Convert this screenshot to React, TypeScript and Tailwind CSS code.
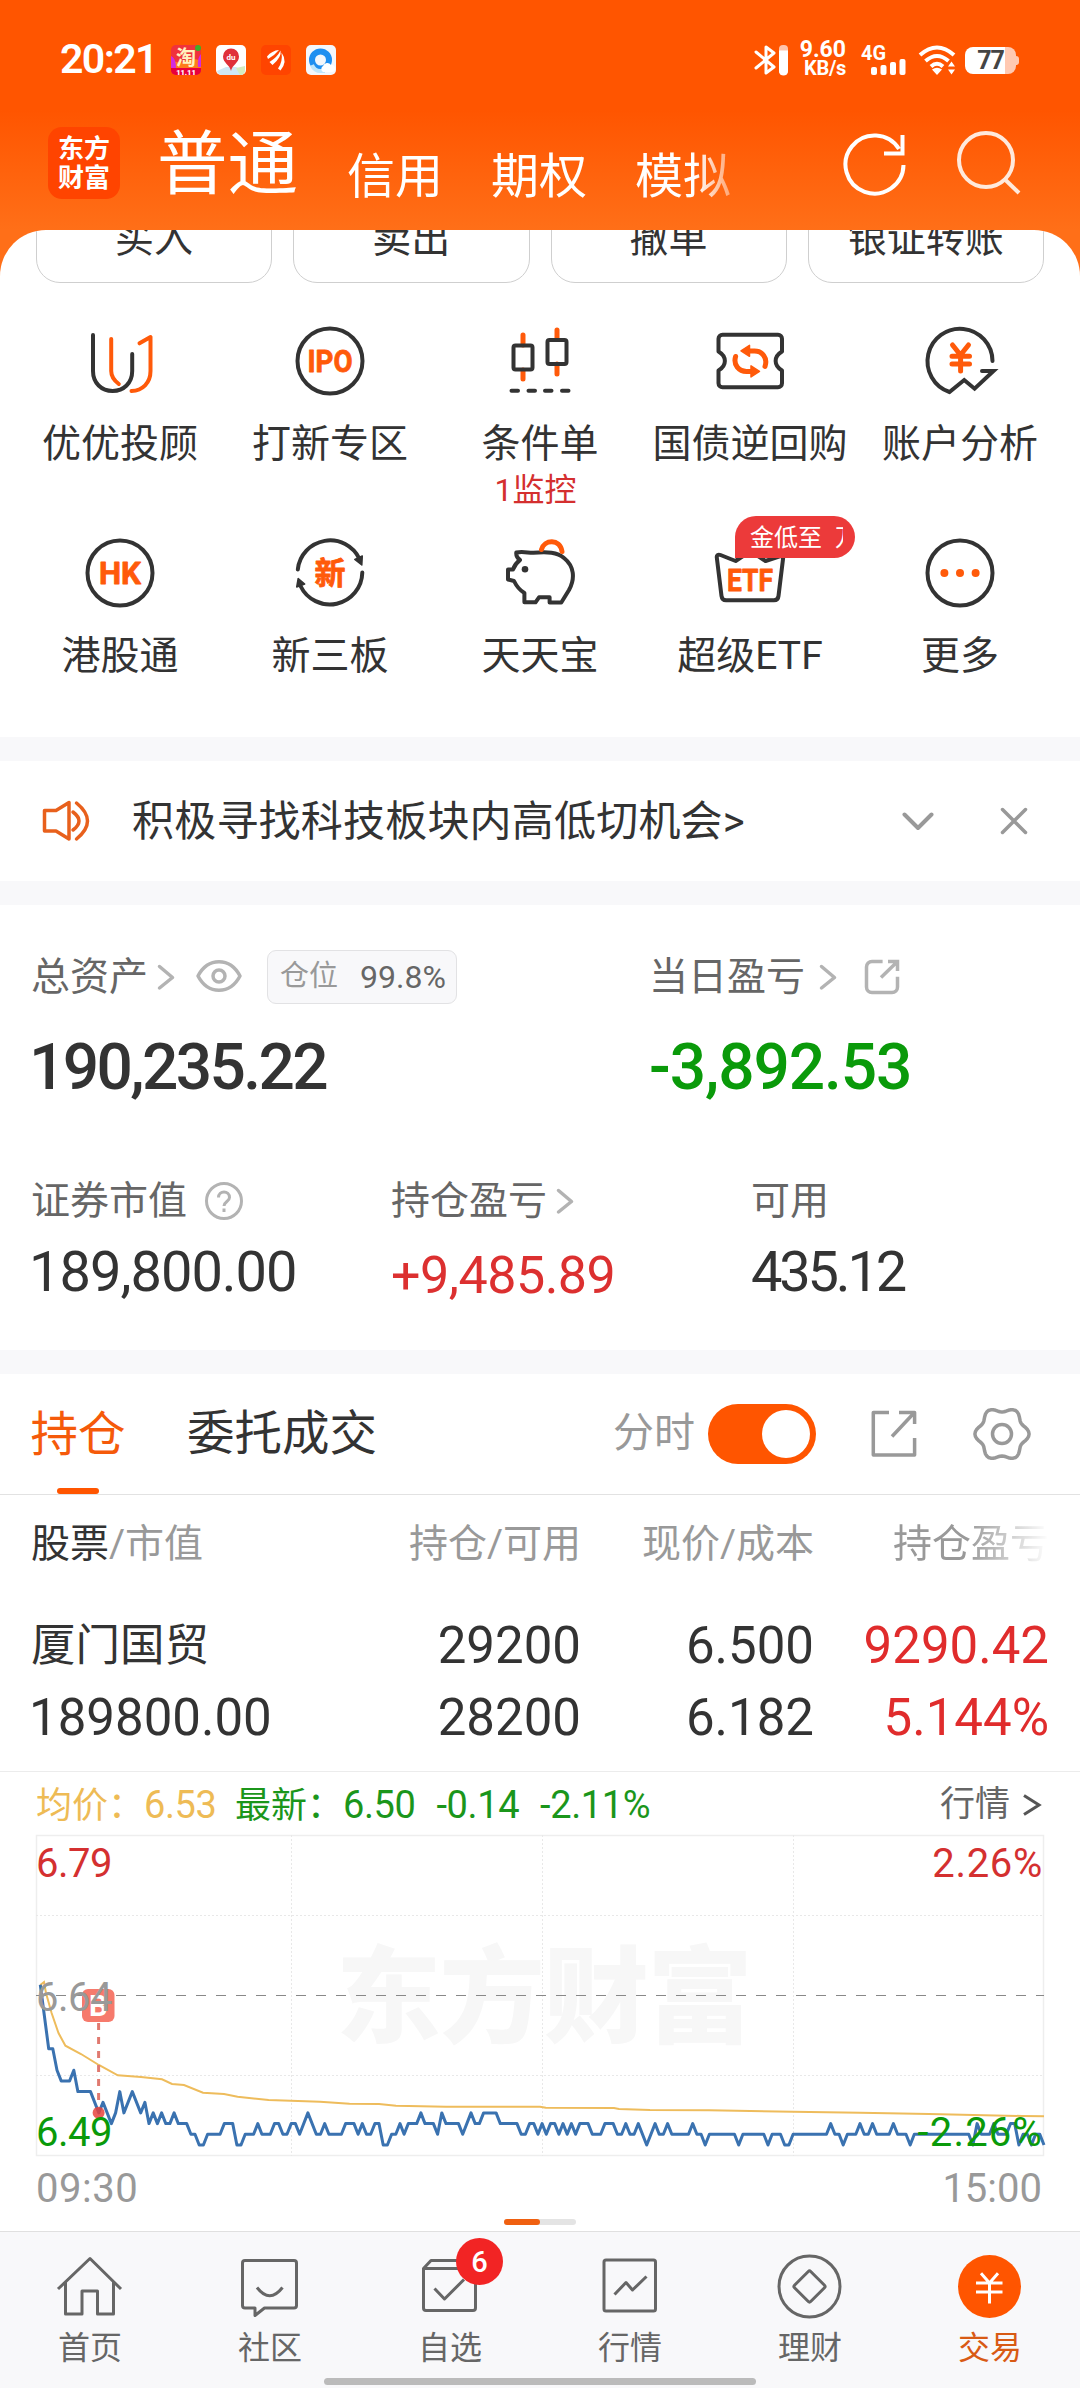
import type { ReactNode } from 'react';
import { clsx } from 'clsx';

const DARK = '#333333';
const ORANGE = '#ff5a0a';

// minute index -> price in cents, only the turning points
const pricePoints: [number, number][] = [
  [0, 665], [2, 659], [3, 659], [4, 657], [5, 656], [7, 656], [8, 657], [9, 655], [12, 655], [14, 653],
  [15, 654], [17, 652], [18, 653], [19, 655], [20, 653], [22, 655], [24, 653], [25, 654], [26, 652], [27, 653],
  [28, 652], [29, 653], [30, 652], [31, 652], [32, 653], [33, 652], [35, 652], [36, 651], [37, 651], [38, 650],
  [39, 650], [40, 651], [43, 651], [44, 652], [46, 652], [47, 650], [48, 650], [49, 651], [51, 651], [52, 652],
  [53, 651], [55, 651], [56, 652], [57, 652], [58, 651], [59, 651], [60, 652], [61, 652], [62, 651], [64, 653],
  [66, 651], [67, 651], [68, 652], [69, 651], [72, 651], [73, 652], [75, 652], [76, 651], [77, 652], [78, 651],
  [79, 651], [80, 652], [81, 652], [82, 650], [83, 650], [84, 651], [85, 651], [86, 652], [87, 651], [88, 652],
  [90, 652], [91, 653], [92, 652], [94, 652], [95, 651], [96, 653], [97, 652], [100, 652], [101, 651], [103, 653],
  [104, 652], [105, 652], [106, 653], [109, 653], [110, 652], [114, 652], [115, 651], [116, 651], [117, 652],
  [118, 652], [119, 651], [120, 652], [121, 651], [122, 652], [123, 652], [124, 651], [125, 652], [126, 651],
  [127, 652], [128, 651], [129, 652], [131, 652], [132, 651], [134, 651], [135, 652], [137, 652], [138, 651],
  [139, 651], [140, 652], [141, 651], [142, 651], [143, 652], [145, 650], [147, 652], [148, 651], [149, 651],
  [150, 652], [151, 651], [155, 651], [156, 652], [157, 651], [158, 651], [159, 650], [160, 651], [166, 651],
  [167, 650], [168, 651], [173, 651], [174, 650], [175, 651], [177, 651], [178, 650], [179, 650], [180, 651],
  [188, 651], [189, 652], [190, 651], [191, 651], [192, 650], [193, 651], [195, 651], [196, 652], [197, 651],
  [198, 651], [199, 652], [200, 651], [203, 651], [204, 652], [205, 651], [207, 651], [208, 650], [209, 651],
  [222, 651], [223, 650], [224, 652], [225, 651], [227, 651], [228, 652], [229, 651], [231, 651], [232, 652],
  [233, 652], [234, 650], [235, 651], [236, 651], [237, 650], [238, 651], [239, 651], [240, 650],
];

const priceLine = pricePoints
  .map(([i, p]) => `${(4.3 + i * 4.182).toFixed(1)},${(320.7 - 10.69 * (p - 649)).toFixed(1)}`)
  .join(' ');

const averageLine =
  '4.3,150 8,147 10,158 15.6,178 22.5,198 29.4,210.7 45,219 62.8,230 81.8,240.3 105,242 126,244.3 136,249 148,250 167,257.7 188,259 201.6,261.7 232.6,265 284,266.7 313.5,268.7 343,269 360,270.7 410,271.7 504,271.7 509.8,272.7 578,273 583,274 614,275 673,275.3 757,276.7 824,277.7 893,279 986,281 1008,281.3';

function MenuIcon({ children }: { children: ReactNode }) {
  return (
    <svg
      viewBox="0 0 84 84"
      className="w-[84px] h-[84px]"
      fill="none"
      stroke={DARK}
      strokeWidth={4}
      strokeLinecap="round"
      strokeLinejoin="round"
    >
      {children}
    </svg>
  );
}

function IconText({ y, width, size, children }: { y: number; width: number; size: number; children: string }) {
  return (
    <text
      x={42}
      y={y}
      textAnchor="middle"
      textLength={width}
      lengthAdjust="spacingAndGlyphs"
      fontSize={size}
      fontWeight={700}
      fill={ORANGE}
      stroke={ORANGE}
      strokeWidth={0.8}
    >
      {children}
    </text>
  );
}

const menu = [
  {
    label: '优优投顾',
    icon: (
      <MenuIcon>
        <path d="M15 16V52c0 12 8.5 20 19.6 20s19.6-8 19.6-20V35" />
        <path stroke={ORANGE} d="M33.2 20V52c0 6 3 9.500 7.600 13M61.500 24.300L72.500 18V52c0 12-8 19.500-19 20" />
      </MenuIcon>
    ),
  },
  {
    label: '打新专区',
    icon: (
      <MenuIcon>
        <circle cx="42" cy="42" r="32.500" />
        <IconText y={53} width={45} size={31}>IPO</IconText>
      </MenuIcon>
    ),
  },
  {
    label: '条件单',
    note: '1监控',
    icon: (
      <MenuIcon>
        <path stroke={ORANGE} strokeWidth={5} d="M25 16V26M25 51V60M59 11V20M59 45V55" />
        <rect x="15.500" y="26.500" width="19" height="24" rx="2" />
        <rect x="49.500" y="21" width="19" height="24" rx="2" />
        <path d="M13.500 71.700h6.500M30.500 71.700h6.500M47 71.700h6.500M64 71.700h6.500" />
      </MenuIcon>
    ),
  },
  {
    label: '国债逆回购',
    icon: (
      <MenuIcon>
        <path d="M14.500 15.700H70a4 4 0 0 1 4 4V32.500c-8.500 5-8.500 14 0 19V64.300a4 4 0 0 1-4 4H14.500a4 4 0 0 1-4-4V51.500c8.500-5 8.500-14 0-19V19.700a4 4 0 0 1 4-4z" />
        <path stroke={ORANGE} strokeWidth={5} d="M27.600 37.500C25 46 31 52.400 38.500 52.400H46M57 47.500C60 38.500 54 32 46.500 32H39" />
        <path fill={ORANGE} stroke={ORANGE} strokeWidth={1.5} d="M51.500 52.400l-8.500-5.500v11zM33 31.800l8.500-5.500v11z" />
      </MenuIcon>
    ),
  },
  {
    label: '账户分析',
    icon: (
      <MenuIcon>
        <path d="M74.500 42A32.500 32.500 0 1 0 31.500 73L46.200 61l10.400 8.700L75.500 52H64" strokeLinejoin="miter" />
        <path stroke={ORANGE} strokeWidth={5} d="M34.500 26l8 10 8-10M34 37.200H51.500M34 45H51.500M42.600 37V52" />
      </MenuIcon>
    ),
  },
  {
    label: '港股通',
    icon: (
      <MenuIcon>
        <circle cx="42" cy="42" r="32.500" />
        <IconText y={53} width={42} size={31}>HK</IconText>
      </MenuIcon>
    ),
  },
  {
    label: '新三板',
    icon: (
      <MenuIcon>
        <path d="M9.800 38.500A32.500 32.500 0 0 1 71.500 28M74.300 41.500A32.500 32.500 0 0 1 12.500 55" />
        <path fill={DARK} strokeWidth={1.5} d="M73.800 34l.500-9-7.500 3.500zM10.200 47.500l-1.500 8.500 8-3z" />
        <IconText y={53} width={31} size={31}>新</IconText>
      </MenuIcon>
    ),
  },
  {
    label: '天天宝',
    icon: (
      <MenuIcon>
        <path d="M22 29c-3-2-4-5-3.700-7.500 7-1.500 12 .500 17 .300 14-1 24-.800 30.700 5.200 10 8 11.500 20 5 32L63.300 71.500H51.600V66.300H41L37.500 71.300H26.400V62c-5-3-8-7-10.400-12L10 48.500V38.500H15c1.500-4 3.500-7 7-9.500z" />
        <circle cx="27" cy="38.300" r="3.300" fill={DARK} stroke="none" />
        <path stroke={ORANGE} strokeWidth={5} d="M43.500 18.500C46 8.500 62 7 64 20.500" />
      </MenuIcon>
    ),
  },
  {
    label: '超级ETF',
    badge: true,
    icon: (
      <MenuIcon>
        <path d="M27.600 30L12.500 24c-2.500-1-4 .300-3.700 2.500L13.500 65c.400 3 2 4.300 4.500 4.300H66c2.500 0 4.200-1.300 4.500-4.300L75.500 24 57.500 30 42.500 20z" />
        <IconText y={60} width={46} size={32}>ETF</IconText>
      </MenuIcon>
    ),
  },
  {
    label: '更多',
    icon: (
      <MenuIcon>
        <circle cx="42" cy="42" r="32.500" />
        <g fill={ORANGE} stroke="none">
          <circle cx="26.400" cy="42" r="4" />
          <circle cx="42" cy="42" r="4" />
          <circle cx="57.600" cy="42" r="4" />
        </g>
      </MenuIcon>
    ),
  },
];

function StatusBar() {
  return (
    <div className="h-[112px] pt-[8px] pl-[60px] pr-[61px] flex items-center text-white">
      <span className="text-[41px] font-semibold tracking-[-1.6px] w-[111px]">20:21</span>
      <div className="flex gap-[15px]">
        <svg viewBox="0 0 30 30" className="w-[30px] h-[30px]">
          <rect width="30" height="30" rx="5" fill="#f0323c" />
          <path d="M0 14q8 6 15 2t15 0v8H0z" fill="#ff7a1a" />
          <path d="M0 11q5 2 5 12H0zM30 9q-4 4-3 13h3z" fill="#d22be0" />
          <circle cx="27" cy="3" r="3" fill="#3fae2a" />
          <path d="M0 23H30v2a5 5 0 0 1-5 5H5a5 5 0 0 1-5-5z" fill="#e8003c" />
          <text x="15" y="20" textAnchor="middle" fontSize="20" fontWeight="700" fill="#fff3c0">淘</text>
          <text x="15" y="29.500" textAnchor="middle" fontSize="7.500" fontWeight="900" fill="#fff">11.11</text>
        </svg>
        <svg viewBox="0 0 30 30" className="w-[30px] h-[30px]">
          <rect width="30" height="30" rx="5" fill="#fff" />
          <path d="M1 26l9-4h10l9 4q-1 4-5 4H6q-4 0-5-4z" fill="#cfe8f6" />
          <path d="M20 23l9-2v4q0 5-5 5z" fill="#d5ecc0" />
          <path d="M15 26c-1-6-8-8-8-14.500a8 8 0 0 1 16 0C23 18 16 20 15 26z" fill="#e0303a" />
          <text x="15" y="15" textAnchor="middle" fontSize="8" fontWeight="700" fill="#fff">du</text>
        </svg>
        <svg viewBox="0 0 30 30" className="w-[30px] h-[30px]">
          <rect width="30" height="30" rx="5" fill="#ff4400" />
          <path d="M6 11.500Q11 5.500 18 5q-4 5-11 9zM8.500 17q8-5 11-11.500 1.500 6.500-8 14.500zM17 23.500q5-7 3.500-16 6.500 9-1 18z" fill="#fff" />
        </svg>
        <svg viewBox="0 0 30 30" className="w-[30px] h-[30px]">
          <rect width="30" height="30" rx="5" fill="#f4f7fb" />
          <circle cx="14.500" cy="15" r="8.500" fill="none" stroke="#1f8ff0" strokeWidth="6" />
          <path d="M6 20a9 9 0 0 0 9 6h4" fill="none" stroke="#bfe6fb" strokeWidth="4" />
          <path d="M17 27a3.500 3.500 0 0 1 0-6 4.500 4.500 0 0 1 8-1 3.500 3.500 0 0 1 1 7z" fill="#fff" />
        </svg>
      </div>

      <div className="ml-auto flex items-center">
        <svg viewBox="0 0 34 32" className="w-[34px] h-[32px]" fill="none" stroke="#fff" strokeWidth="3">
          <path d="M2 8L20 23 12 29V3L20 9 2 24" strokeLinejoin="round" strokeLinecap="round" />
          <rect x="25" y="1" width="9" height="30" rx="4" fill="#ffc4aa" stroke="none" />
          <path d="M25 6.500h9V27a4 4 0 0 1-9 0z" fill="#fff" stroke="none" />
        </svg>
        <div className="ml-[10px] w-[48px] text-right leading-[19px] font-bold -mt-[2px]">
          <div className="text-[23px]">9.60</div>
          <div className="text-[20px] tracking-[-0.3px]">KB/s</div>
        </div>
        <svg viewBox="0 0 46 32" className="ml-[15px] w-[46px] h-[32px]" fill="#fff">
          <text x="0" y="16" fontSize="21" fontWeight="700" textLength="25" lengthAdjust="spacingAndGlyphs">4G</text>
          <rect x="10" y="23" width="6" height="8" rx="2" />
          <rect x="19.500" y="21" width="6" height="10" rx="2" />
          <rect x="29" y="18" width="6" height="13" rx="2" />
          <rect x="38.500" y="15" width="6" height="16" rx="2" />
        </svg>
        <svg viewBox="0 0 40 32" className="ml-[11px] w-[40px] h-[32px]" fill="none" stroke="#fff" strokeWidth="4">
          <path d="M2 11Q19 -4 36 11M7.500 17Q19 7 30.500 17M13 22.500Q19 17 25 22.500" />
          <path d="M19 31l-5-5.500q5-3.500 10 0zM30 22.500l3.500-5 3.500 5zM30 25.500l3.500 5 3.500-5z" fill="#fff" stroke="none" />
        </svg>
        <div className="ml-[7px] flex items-center">
          <div className="w-[51px] h-[27px] rounded-[8px] bg-[linear-gradient(90deg,#fff_79%,#ffc9b2_79%)] text-center text-[25px] leading-[28px] font-bold text-[#444] tracking-[-1px]">
            77
          </div>
          <div className="w-[3px] h-[9px] rounded-r-[3px] bg-[#ffc9b2]" />
        </div>
      </div>
    </div>
  );
}

function Header() {
  return (
    <header className="h-[118px] flex pl-[48px]">
      <div className="mt-[15px] w-[72px] h-[72px] rounded-[14px] bg-[#ff4400] pt-[8px] text-center text-[26px] leading-[28.500px] font-bold text-white">
        东方
        <br />
        财富
      </div>
      <div className="ml-[37px] w-[618px] flex text-white [mask-image:linear-gradient(90deg,#000_87%,transparent_97%)]">
        <span className="text-[70.500px] leading-[107px] w-[144px]">普通</span>
        <div className="ml-[46px] flex gap-[48px] text-[48px] leading-[130px]">
          <span>信用</span>
          <span>期权</span>
          <span>模拟</span>
        </div>
      </div>
      <svg viewBox="0 0 68 68" className="ml-[66px] mt-[18px] w-[68px] h-[68px]" fill="none" stroke="#fff" strokeWidth="4">
        <path d="M62.500 35A29 29 0 1 1 58 19M61.500 5V23.500H43" />
      </svg>
      <svg viewBox="0 0 68 68" className="ml-[44px] mt-[18px] w-[68px] h-[68px]" fill="none" stroke="#ffe9dc" strokeWidth="4">
        <circle cx="33" cy="30" r="27" />
        <path d="M52 49.500L66 63" />
      </svg>
    </header>
  );
}

function QuickMenu() {
  return (
    <section className="h-[507px] bg-white rounded-t-[46px] overflow-hidden shrink-0">
      <div className="-mt-[35px] mx-[36px] grid grid-cols-4 gap-[21px]">
        {['买入', '卖出', '撤单', '银证转账'].map((t) => (
          <button key={t} className="h-[88px] border border-[#cfcfcf] rounded-[24px] text-[39px] leading-[86px]">
            {t}
          </button>
        ))}
      </div>
      <div className="mt-[36px] mx-[15px] grid grid-cols-5">
        {menu.map((item) => (
          <div key={item.label} className="relative h-[212px] flex flex-col items-center">
            {item.icon}
            <span className="mt-[21px] text-[39px] leading-[40px] whitespace-nowrap">{item.label}</span>
            {item.note && (
              <span className="mt-[7px] mr-[9px] text-[32px] leading-[38px] text-[#d42f2f]">{item.note}</span>
            )}
            {item.badge && (
              <div className="absolute left-[90px] -top-[15px] w-[120px] h-[42px] rounded-[21px] rounded-bl-none bg-[#ec3a3a] pl-[15px] pr-[12px]">
                <div className="overflow-hidden whitespace-nowrap text-[24px] leading-[44px] text-white">
                  金低至<span className="ml-[13px]">万</span>
                </div>
              </div>
            )}
          </div>
        ))}
      </div>
    </section>
  );
}

function Notice() {
  return (
    <section className="h-[120px] my-[24px] bg-white flex items-center pl-[42px]">
      <svg viewBox="0 0 48 48" className="w-[48px] h-[48px]" fill="none" stroke="#e8601c" strokeWidth="3.500" strokeLinejoin="round" strokeLinecap="round">
        <path d="M2.500 13.500H14L27 5.500V42L14 34H2.500zM31 15q12 9 0 18M34.500 6q22 18 0 36" />
      </svg>
      <span className="ml-[42px] w-[770px] pt-[1px] text-[42px] leading-[44px] tracking-[0.2px]">积极寻找科技板块内高低切机会&gt;</span>
      <svg viewBox="0 0 32 32" className="w-[32px] h-[32px]" fill="none" stroke="#999" strokeWidth="4" strokeLinecap="round" strokeLinejoin="round">
        <path d="M2.500 9.500L16 23 29.500 9.500" />
      </svg>
      <svg viewBox="0 0 32 32" className="ml-[64px] w-[32px] h-[32px]" fill="none" stroke="#999" strokeWidth="3.500" strokeLinecap="round">
        <path d="M4.500 4.500L27.500 27.500M27.500 4.500L4.500 27.500" />
      </svg>
    </section>
  );
}

function Chevron({ className }: { className?: string }) {
  return (
    <svg viewBox="0 0 18 28" className={clsx('w-[18px] h-[28px]', className)} fill="none" stroke="#b3b3b3" strokeWidth="3.500" strokeLinecap="round" strokeLinejoin="round">
      <path d="M2.500 3.500L15.500 14.500 2.500 25" />
    </svg>
  );
}

function Assets() {
  return (
    <section className="h-[445px] bg-white pt-[45px] pl-[31px] text-[39px] text-[#666] shrink-0">
      <div className="h-[54px] flex items-center">
        <div className="w-[618px] flex items-center">
          <span>总资产</span>
          <Chevron className="ml-[9px]" />
          <svg viewBox="0 0 46 34" className="ml-[21px] w-[46px] h-[34px] -mt-[2px]" fill="none" stroke="#b3b3b3" strokeWidth="3.500">
            <path d="M2 17C12-2 34-2 44 17 34 36 12 36 2 17z" strokeLinejoin="round" />
            <circle cx="23" cy="17" r="6" />
          </svg>
          <div className="ml-[25px] w-[190px] h-[54px] border border-[#e2e2e4] rounded-[9px] bg-[#f8f8fa] flex items-center pl-[12px]">
            <span className="text-[29px] text-[#999]">仓位</span>
            <span className="ml-[22px] text-[32px] leading-[34px]">99.8%</span>
          </div>
        </div>
        <span>当日盈亏</span>
        <Chevron className="ml-[14px]" />
        <svg viewBox="0 0 36 36" className="ml-[27px] w-[36px] h-[36px]" fill="none" stroke="#b3b3b3" strokeWidth="3.500">
          <path d="M18.600 2.500H8a5.500 5.500 0 0 0-5.500 5.500V28a5.500 5.500 0 0 0 5.500 5.500H28a5.500 5.500 0 0 0 5.500-5.500V17.700M24 2.500h9.500V12M17 18.500L33 3" />
        </svg>
      </div>
      <div className="mt-[31px] h-[66px] flex items-center text-[64px] leading-[66px] font-medium tracking-[-2.6px]">
        <span className="-ml-[2px] w-[620px] text-[#333]">190,235.22</span>
        <span className="text-[#0a9a0a] tracking-[-1.1px]">-3,892.53</span>
      </div>
      <div className="mt-[80px] grid grid-cols-[360px_360px_1fr]">
        <div className="h-[40px] flex items-center leading-[40px]">
          证券市值
          <svg viewBox="0 0 40 40" className="ml-[17px] w-[40px] h-[40px]" fill="none" stroke="#b3b3b3" strokeWidth="3">
            <circle cx="20" cy="20" r="17.500" />
            <path d="M14.500 16.500c0-7.500 11-7.500 11 0 0 4-5.500 4-5.500 8.500M20 27.500v3.500" />
          </svg>
        </div>
        <div className="h-[40px] flex items-center leading-[40px]">
          持仓盈亏
          <Chevron className="ml-[9px]" />
        </div>
        <div className="leading-[40px]">可用</div>
        <div className="mt-[21px] -ml-[2px] text-[56px] leading-[60px] tracking-[-1px] text-[#333]">189,800.00</div>
        <div className="mt-[25px] text-[52px] leading-[60px] tracking-[-0.5px] text-[#dc3030]">+9,485.89</div>
        <div className="mt-[21px] text-[56px] leading-[60px] tracking-[-3.2px] text-[#333]">435.12</div>
      </div>
    </section>
  );
}

// six soft teeth, valleys at every 60 degrees
const gearPath =
  Array.from({ length: 72 }, (_, k) => {
    const a = (k * 5 * Math.PI) / 180;
    const r = 24.5 - 2.6 * Math.cos(6 * (a - Math.PI / 2));
    return `${k ? 'L' : 'M'}${(29 + r * Math.cos(a)).toFixed(1)} ${(29 + r * Math.sin(a)).toFixed(1)}`;
  }).join('') + 'Z';

function Tabs() {
  return (
    <div className="h-[121px] pl-[31px] border-b border-[#e2e2e2] flex items-center text-[47.500px] whitespace-nowrap">
      <div className="h-full w-[94px] flex flex-col items-center">
        <span className="mt-[31px] leading-[60px] text-[#f55a0a]">持仓</span>
        <div className="mt-auto w-[42px] h-[6px] rounded-[3px] bg-[#ff5500]" />
      </div>
      <span className="ml-[62px] pt-[2px] w-[426px]">委托成交</span>
      <span className="text-[41px] text-[#999]">分时</span>
      <div className="ml-[13px] w-[108px] h-[60px] rounded-full bg-[#ff5500] flex justify-end items-center pr-[6px]">
        <div className="w-[48px] h-[48px] rounded-full bg-white" />
      </div>
      <svg viewBox="0 0 50 50" className="ml-[53px] w-[50px] h-[50px]" fill="none" stroke="#999" strokeWidth="3.500">
        <path d="M20 3.500H4.300V46H45.600V29M30 3.500H45.600V15M23 27.500L45 4" strokeLinejoin="round" />
      </svg>
      <svg viewBox="0 0 58 58" className="ml-[54px] w-[58px] h-[58px]" fill="none" stroke="#999" strokeWidth="3.500" strokeLinejoin="round">
        <path d={gearPath} />
        <circle cx="29" cy="29" r="9.500" />
      </svg>
    </div>
  );
}

function Holdings() {
  return (
    <div className="h-[277px] border-b border-[#ececec] pt-[28px] px-[31px] text-[51px]">
      <div className="h-[42px] grid grid-cols-[250px_300px_233px_1fr] text-[39px] leading-[42px] text-[#999]">
        <div>
          <span className="text-[#333]">股票</span>/市值
        </div>
        <div className="text-right">持仓/可用</div>
        <div className="text-right">现价/成本</div>
        <div className="pl-[79px] overflow-hidden whitespace-nowrap [mask-image:linear-gradient(90deg,#000_65%,transparent_100%)]">
          持仓盈亏
        </div>
      </div>
      <div className="mt-[45px] grid grid-cols-[250px_300px_233px_1fr] leading-[72px] text-right">
        <div className="text-left text-[44.500px] whitespace-nowrap">厦门国贸</div>
        <div>29200</div>
        <div>6.500</div>
        <div className="text-[#e02c2c]">9290.42</div>
        <div className="-ml-[2px] text-left">189800.00</div>
        <div>28200</div>
        <div>6.182</div>
        <div className="text-[#e02c2c]">5.144%</div>
      </div>
    </div>
  );
}

function Chart() {
  return (
    <div className="h-[459px] px-[36px] shrink-0">
      <div className="h-[63px] pt-[3px] flex items-center text-[38px] tracking-[-0.4px] text-[#1b961b]">
        <span className="text-[#eebb55] w-[199px] whitespace-nowrap">
          <span className="text-[36px] tracking-normal">均价：</span>6.53
        </span>
        <span className="whitespace-nowrap">
          <span className="text-[36px] tracking-normal">最新：</span>6.50
        </span>
        <span className="ml-[21px]">-0.14</span>
        <span className="ml-[21px]">-2.11%</span>
        <span className="ml-auto text-[35px] tracking-normal text-[#666]">行情</span>
        <svg viewBox="0 0 20 24" className="ml-[12px] mr-[2px] w-[20px] h-[24px]" fill="none" stroke="#555" strokeWidth="3">
          <path d="M2 2.500L17 12 2 21.500" />
        </svg>
      </div>
      <div className="relative h-[321px] text-[40px] tracking-[-0.5px]">
        <svg viewBox="0 0 1008 321" className="w-[1008px] h-[321px] overflow-visible" fill="none">
          <text x="300" y="199" fontSize="105" fontWeight="900" fill="#f7f7f7" textLength="416">东方财富</text>
          <rect x="0.500" y="0.500" width="1007" height="320" stroke="#eeeeee" strokeWidth="1.500" />
          <path d="M0 80.500H1008M0 240.500H1008M255.500 0V321M506.500 0V321M757.500 0V321" stroke="#e8e8e8" strokeDasharray="2 2" />
          <path d="M0 160.500H1008" stroke="#888" strokeDasharray="10 10" />
          <polyline points={averageLine} stroke="#eebc5c" strokeWidth="2" />
          <polyline points={priceLine} stroke="#3a72b0" strokeWidth="3" strokeLinejoin="round" />
          <rect x="46" y="154" width="32.500" height="33" rx="6" fill="#f67a6c" />
          <text x="62.300" y="181" textAnchor="middle" fontSize="29" fontWeight="700" fill="#fff" letterSpacing="0">B</text>
          <path d="M62.600 188V270" stroke="#e07a70" strokeWidth="3" strokeDasharray="7 7" />
          <circle cx="62.600" cy="277.700" r="6" fill="#e8433e" fillOpacity="0.850" />
        </svg>
        <div className="absolute inset-0 pr-[2px] leading-[40px]">
          <div className="pt-[9px] flex justify-between text-[#d43030]">
            <span>6.79</span>
            <span className="tracking-[0.7px] -mr-[1px]">2.26%</span>
          </div>
          <div className="mt-[94px] text-[#999]">6.64</div>
          <div className="mt-[95px] flex justify-between text-[#0a9a0a]">
            <span>6.49</span>
            <span className="tracking-[1.200px] -mr-[1px]">-2.26%</span>
          </div>
        </div>
      </div>
      <div className="mt-[12px] pr-[2px] flex justify-between text-[40px] leading-[42px] text-[#999]">
        <span className="tracking-[0.5px]">09:30</span>
        <span>15:00</span>
      </div>
      <div className="mt-[9px] flex justify-center">
        <div className="w-[72px] h-[6px] rounded-full bg-[#e4e4e4]">
          <div className="w-[36px] h-[6px] rounded-full bg-[#f06010]" />
        </div>
      </div>
    </div>
  );
}

const navItems = [
  { label: '首页', icon: <path d="M4 39L36 8.500 67 39M11.500 32V64H28V41H43.500V64H59.500V32" /> },
  {
    label: '社区',
    icon: (
      <>
        <path d="M11 10.500H60a2.500 2.500 0 0 1 2.500 2.500V55.500a2.500 2.500 0 0 1-2.500 2.500H30.500L21 65.500V58H11a2.500 2.500 0 0 1-2.500-2.500V13a2.500 2.500 0 0 1 2.500-2.500z" />
        <path d="M23 37.500Q35.700 54 48.500 37.500" />
      </>
    ),
  },
  {
    label: '自选',
    badge: 6,
    icon: <path d="M9.500 18.500L17 10.500H55L61.500 18.500V58a2.500 2.500 0 0 1-2.500 2.500H12a2.500 2.500 0 0 1-2.500-2.500zH61M20.500 38.500L30.500 49 50 29.500" />,
  },
  {
    label: '行情',
    icon: (
      <>
        <rect x="10" y="10" width="51.500" height="51" rx="2" />
        <path d="M20.500 44.500L32 32.500 38.500 40 52.500 26.500" />
      </>
    ),
  },
  {
    label: '理财',
    icon: (
      <>
        <circle cx="35.500" cy="36.500" r="30.500" />
        <path d="M34.300 21.500q1.200-1.200 2.400 0L50.500 35.300q1.200 1.200 0 2.400L36.700 51.500q-1.200 1.200-2.400 0L20.500 37.700q-1.200-1.200 0-2.400z" />
      </>
    ),
  },
  {
    label: '交易',
    active: true,
    icon: (
      <>
        <circle cx="35.500" cy="36.500" r="31.500" fill="#ff5500" stroke="none" />
        <path d="M27 23.300L35.500 33 44 23.300M22 33H48.500M22 42H48.500M35.500 33V53.500" stroke="#fff" />
      </>
    ),
  },
];

function BottomNav() {
  return (
    <nav className="relative h-[157px] border-t border-[#e0e0e0] grid grid-cols-6 pt-[18px] shrink-0">
      {navItems.map((item) => (
        <div key={item.label} className="relative flex flex-col items-center">
          <svg viewBox="0 0 72 72" className="w-[72px] h-[72px]" fill="none" stroke="#666" strokeWidth="3" strokeLinejoin="round">
            {item.icon}
          </svg>
          <span className={clsx('mt-[8px] text-[32px] leading-[36px]', item.active ? 'text-[#d85a14]' : 'text-[#666]')}>
            {item.label}
          </span>
          {item.badge && (
            <div className="absolute left-[96px] -top-[12px] w-[47px] h-[47px] rounded-full bg-[#f22424] text-white text-[29px] leading-[48px] font-medium text-center">
              {item.badge}
            </div>
          )}
        </div>
      ))}
      <div className="absolute left-[324px] bottom-[3px] w-[432px] h-[7px] rounded-full bg-[#bbbbbb]" />
    </nav>
  );
}

export default function App() {
  return (
    <div className="w-[1080px] h-[2388px] overflow-hidden bg-[#f8f8fa] text-[#333] font-[Roboto,'Noto_Sans_CJK_SC',sans-serif]">
      <div className="bg-[linear-gradient(180deg,#ff5500_0px,#ff5500_110px,#ff6f18_230px)]">
        <StatusBar />
        <Header />
        <QuickMenu />
      </div>
      <Notice />
      <Assets />
      <section className="mt-[24px] bg-white">
        <Tabs />
        <Holdings />
        <Chart />
      </section>
      <BottomNav />
    </div>
  );
}
